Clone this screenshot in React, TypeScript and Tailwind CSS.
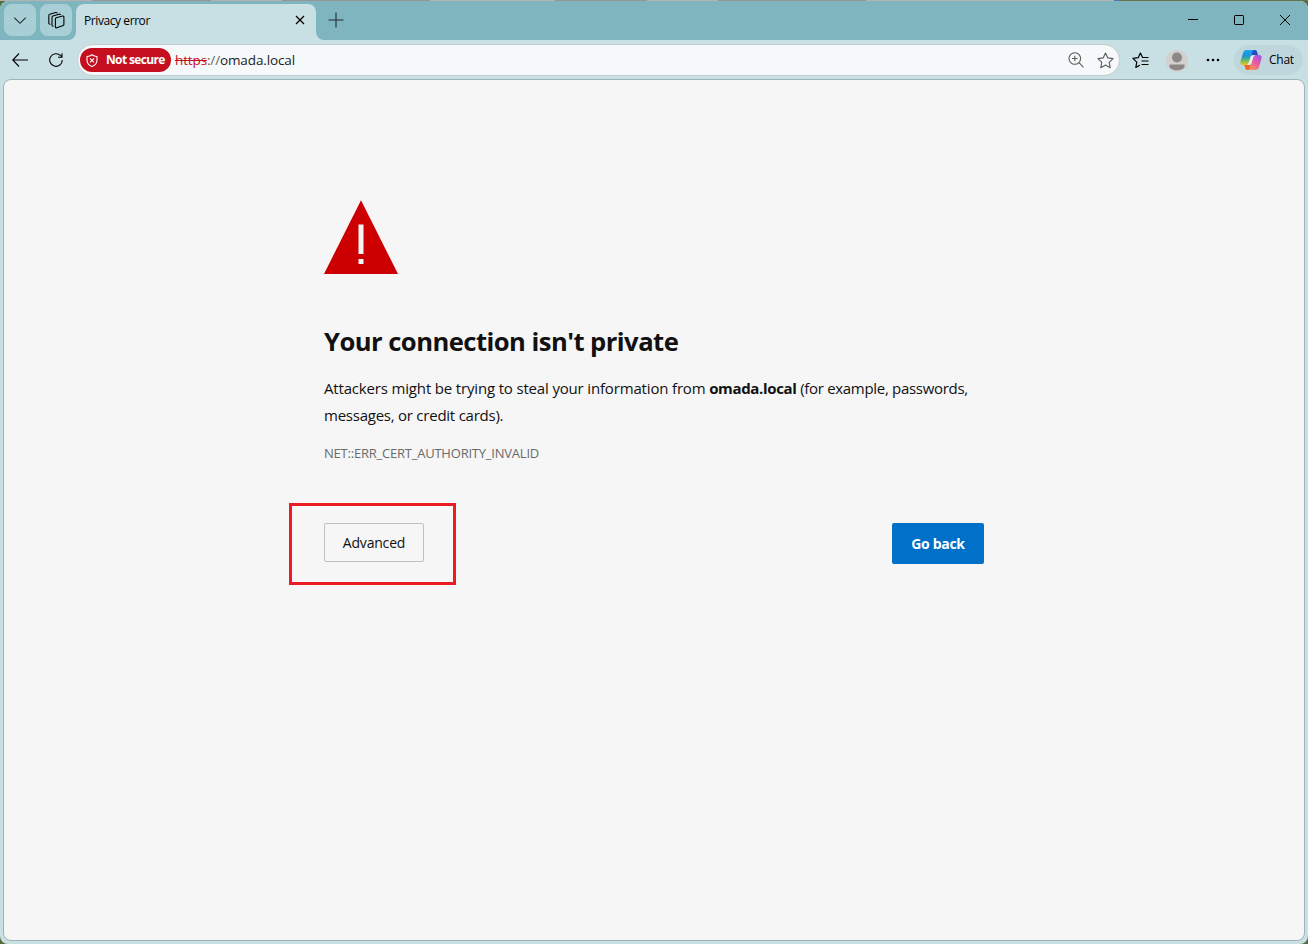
import React from "react";

const ICON = "fill-none stroke-current shrink-0";

function TabBar() {
  return (
    <div className="flex h-[39px] rounded-tr-lg rounded-tl-lg bg-[#7fb5bf]">
      <div className="flex w-[76px] gap-1 rounded-br-lg pt-[3px] pl-1">
        <button className="flex h-8 w-8 items-center justify-center rounded-lg bg-[#a8cfd6]">
          <svg className={ICON + " text-[#1f2d30]"} width="14" height="14" viewBox="0 0 14 14" strokeWidth="1.1">
            <path d="M1.200 4.700L7 10.300l5.800-5.600" />
          </svg>
        </button>
        <button className="flex h-8 w-8 items-center justify-center rounded-lg bg-[#a8cfd6]">
          <svg className={ICON} width="18" height="18" viewBox="0 0 18 18" strokeWidth="1.1" strokeLinejoin="round" strokeLinecap="round">
            <path d="M9.300 6.700l6.200-1.700q1.400-.3 1.400 1v7.400q0 .8-.8 1.100l-6.200 2.200q-1.500.5-1.500-.9V7.900q0-.9.900-1.200z" />
            <path d="M6.200 15.200q-1.200 0-1.200-1.200V6.200q0-.9.8-1.200l6.200-1.800q1-.2 1.400.3" />
            <path d="M3 13.200q-1.200 0-1.200-1.200V4.500q0-.9.900-1.200l6-1.800q1-.2 1.400.3" />
          </svg>
        </button>
      </div>
      <div className="flex w-[240px] flex-col pt-[3px]">
        <div className="flex flex-1 items-start justify-between rounded-t-lg bg-[#c8dfe3] pt-[8px] pr-[11px] pl-2">
          <span className="text-[12px] leading-[18px] tracking-[-0.42px]">Privacy error</span>
          <svg className={ICON + " mt-[3px]"} width="10" height="10" viewBox="0 0 10 10" strokeWidth="1.2">
            <path d="M1 1l8 8M9 1L1 9" />
          </svg>
        </div>
      </div>
      <div className="flex flex-1 pt-[11px] pl-3">
        <svg className={ICON + " text-[#1f2d30]"} width="16" height="16" viewBox="0 0 16 16" strokeWidth="1.1">
          <path d="M8 .5v15M.5 8h15" />
        </svg>
      </div>
      <div className="flex gap-9 pt-[14px] pr-[18px]">
        <svg className={ICON} width="10" height="10" viewBox="0 0 10 10">
          <path d="M0 4.500h10" />
        </svg>
        <svg className={ICON} width="10" height="10" viewBox="0 0 10 10">
          <rect x=".5" y=".5" width="9" height="9" rx=".7" />
        </svg>
        <svg className={ICON} width="10" height="10" viewBox="0 0 10 10">
          <path d="M0 0l10 10M10 0L0 10" />
        </svg>
      </div>
    </div>
  );
}

// the toolbar colour shows through under the tab bar, rounded next to the active tab
function TabCorners() {
  return (
    <>
      <svg className="absolute top-[31px] left-[68px]" width="8" height="8" viewBox="0 0 8 8">
        <path d="M8 0v8H0a8 8 0 0 0 8-8z" fill="#c8dfe3" />
      </svg>
      <svg className="absolute top-[31px] left-[316px]" width="8" height="8" viewBox="0 0 8 8">
        <path d="M0 0v8h8a8 8 0 0 1-8-8z" fill="#c8dfe3" />
      </svg>
    </>
  );
}

function CopilotLogo() {
  return (
    <svg className="shrink-0" width="22" height="22" viewBox="0 0 22 22">
      <defs>
        <linearGradient id="cpBlue" x1="0" y1="0" x2="0" y2="1">
          <stop offset="0" stopColor="#1ba4f4" />
          <stop offset=".4" stopColor="#1b93d4" />
          <stop offset=".72" stopColor="#6fbb5c" />
          <stop offset="1" stopColor="#f2c81c" />
        </linearGradient>
        <linearGradient id="cpPink" x1=".8" y1="0" x2=".2" y2="1">
          <stop offset="0" stopColor="#a953ea" />
          <stop offset=".5" stopColor="#e95a9c" />
          <stop offset="1" stopColor="#ff9a56" />
        </linearGradient>
      </defs>
      <path d="M11 1h4c1.300 0 1.800.9 2.200 2.200L18 6h-3c-2 0-3 .8-3.500 2.500z" fill="#1c4fc4" />
      <path d="M11 21H7.500c-1.400 0-2-.9-2.400-2.200L4.300 16H7c2 0 3-.8 3.500-2.500z" fill="#f0642e" />
      <path d="M6.500 1H14c-1.200.4-1.800 1.400-2.200 2.800L9 13c-.6 2-1.600 3-3.400 3H3C.7 16 0 14.500.5 12.500L3 4c.6-2 1.600-3 3.500-3z" fill="url(#cpBlue)" />
      <path d="M15.500 21H8c1.200-.4 1.800-1.400 2.200-2.800L13 9c.6-2 1.600-3 3.400-3H19c2.300 0 3 1.500 2.500 3.500L19 18c-.6 2-1.600 3-3.500 3z" fill="url(#cpPink)" />
      <path d="M9.200 12.500l1.300-4.200c.5-1.600 1.400-2.300 3-2.300h.8L12.800 9.500l-1.300 4.200c-.5 1.600-1.400 2.300-3 2.300h-.8z" fill="#e4eef0" />
    </svg>
  );
}

function Toolbar() {
  return (
    <div className="flex h-[39px] items-center pt-px pl-3">
      <svg className={ICON} width="16" height="14" viewBox="0 0 16 14" strokeWidth="1.1">
        <path d="M7 .5L.8 7 7 13.500M.8 7H16" />
      </svg>
      <svg className={ICON + " ml-[21px]"} width="14" height="14" viewBox="0 0 14 14" strokeWidth="1.100">
        <path d="M13.300 7A6.300 6.300 0 1 1 11.600 2.700L12.800 4M13 .2V4.200H9" />
      </svg>

      <div className="ml-[14px] flex h-[32px] w-[1043px] shrink-0 items-center rounded-full border border-[#c5cccf] bg-[#f5f9fa] pr-[5px] pl-[2px]">
        <div className="flex h-6 w-[91px] shrink-0 items-center rounded-full bg-[#c50f1f] pl-[6px] text-white">
          <svg className={ICON} width="12" height="13" viewBox="0 0 12 13" strokeWidth="1.1" strokeLinejoin="round">
            <path d="M6 .7c1.400 1.100 3 1.700 5 1.800v3.700c0 3-1.800 5-5 6.200-3.200-1.200-5-3.200-5-6.200V2.500C3 2.400 4.600 1.800 6 .7z" />
            <path d="M4 4.300l4 4M8 4.300l-4 4" />
          </svg>
          <span className="ml-2 text-[12px] font-bold tracking-[-0.65px] whitespace-nowrap">Not secure</span>
        </div>
        <div className="ml-1 flex-1 text-[13.500px] leading-5 tracking-[-0.13px] text-[#1b1b1b]">
          <span className="text-[#c50f1f] line-through">https</span>
          <span className="text-[#606366]">://</span>omada.local
        </div>
        <svg className={ICON + " text-[#5c5c5c]"} width="16" height="16" viewBox="0 0 16 16" strokeWidth="1.1">
          <circle cx="6.800" cy="6.500" r="5.800" />
          <path d="M11 10.700l4.500 4.600M6.800 3.700v5.600M4 6.500h5.600" />
        </svg>
        <svg className={ICON + " ml-[13px] text-[#5c5c5c]"} width="17" height="17" viewBox="0 0 17 17" strokeWidth="1.1" strokeLinejoin="round">
          <path d="M8.500 1l2.300 4.900 5.300.7-3.900 3.700 1 5.400-4.700-2.600-4.700 2.600 1-5.400L.9 6.600l5.300-.7z" />
        </svg>
      </div>

      <svg className={ICON + " mt-px ml-3"} width="17" height="17" viewBox="0 0 17 17" strokeWidth="1.200" strokeLinejoin="round">
        <path d="M16.500 5.500h-5.900L8.400 1 6.200 5.700.9 6.400l3.900 3.700-1 5.300 4.100-2.200M9.500 9h7M9.500 12.500h7" />
      </svg>
      <svg className="mt-px ml-4 shrink-0" width="24" height="24" viewBox="0 0 24 24">
        <circle cx="12" cy="12" r="11" fill="#d2d0ce" />
        <circle cx="12" cy="8.500" r="5" fill="#8a8785" />
        <path d="M4.500 15.500h15v1.800c0 2.200-3.300 4-7.500 4s-7.500-1.800-7.500-4z" fill="#8a8785" />
      </svg>
      <svg className="ml-[17px] shrink-0" width="14" height="4" viewBox="0 0 14 4">
        <circle cx="2" cy="2" r="1.300" />
        <circle cx="7" cy="2" r="1.300" />
        <circle cx="12" cy="2" r="1.300" />
      </svg>
      <button className="ml-[14px] flex h-[30px] w-[69px] shrink-0 items-center rounded-full bg-[#bfd7dc] pl-[6px]">
        <CopilotLogo />
        <span className="ml-[7px] text-[12px] tracking-[-0.25px]">Chat</span>
      </button>
    </div>
  );
}

// sliver of whatever window lies behind the browser
function BackdropEdge() {
  return (
    <div className="flex h-px">
      <div className="w-[92px] bg-[#b5b2b1]" />
      <div className="w-[119px] bg-[#989595]" />
      <div className="w-[71px] bg-[#b5b2b1]" />
      <div className="w-[148px] bg-[#989595]" />
      <div className="w-[125px] bg-[#b5b2b1]" />
      <div className="w-[92px] bg-[#989595]" />
      <div className="w-[71px] bg-[#b5b2b1]" />
      <div className="w-[148px] bg-[#989595]" />
      <div className="w-[248px] bg-[#b5b2b1]" />
      <div className="w-[6px] bg-[#4a78b8]" />
      <div className="flex-1 bg-[#68734e]" />
    </div>
  );
}

export default function App() {
  return (
    <div className="h-[944px] w-[1308px] overflow-hidden bg-[#556b3c] font-['Open_Sans','Noto_Sans',sans-serif] text-black">
      <BackdropEdge />
      <div className="relative flex h-[943px] flex-col overflow-hidden rounded-lg bg-[#c8dfe3]">
        <TabBar />
        <TabCorners />
        <Toolbar />
        <main className="mx-[3px] mb-[3px] flex-1 rounded-lg border border-[#9fb3b8] bg-[#f6f6f6] pt-[120px] pl-[320px]">
          <div className="flex w-[660px] flex-col">
            <svg width="74" height="75" viewBox="0 0 74 75">
              <path d="M37 .2L74 74H0z" fill="#cc0000" />
              <path d="M34.500 24.500h5v29.500h-5zM34.500 59h5v5h-5z" fill="#f6f6f6" />
            </svg>
            <h1 className="mt-[49px] text-[25.600px] leading-9 font-bold tracking-[-0.54px] whitespace-nowrap text-[#111111]">
              Your connection isn't private
            </h1>
            <p className="mt-[15px] text-[15px] leading-[27px] tracking-[-0.24px] text-[#111111]">
              <span className="whitespace-nowrap">
                <span className="tracking-[-0.165px]">Attackers might be trying to steal your information from </span>
                <b className="font-bold tracking-[-0.35px]">omada.local</b> <span className="tracking-[-0.3px]">(for example, passwords,</span>
              </span>
              <br />
              messages, or credit cards).
            </p>
            <div className="mt-[14px] text-[13px] leading-[21px] tracking-[-0.22px] text-[#6b6b6b]">NET::ERR_CERT_AUTHORITY_INVALID</div>
            <div className="mt-[39px] -ml-[35px] flex items-start justify-between">
              <div className="h-[82px] w-[167px] border-3 border-[#ed1c24] pt-[17px] pl-[32px]">
                <button className="h-[39px] w-[100px] rounded-[2px] border border-[#bfbfbf] text-[14px] tracking-[-0.2px] text-[#111111]">Advanced</button>
              </div>
              <button className="mt-5 h-[41px] w-[92px] rounded-[2px] bg-[#0070c9] text-[14px] font-bold tracking-[-0.3px] text-white">Go back</button>
            </div>
          </div>
        </main>
      </div>
    </div>
  );
}
